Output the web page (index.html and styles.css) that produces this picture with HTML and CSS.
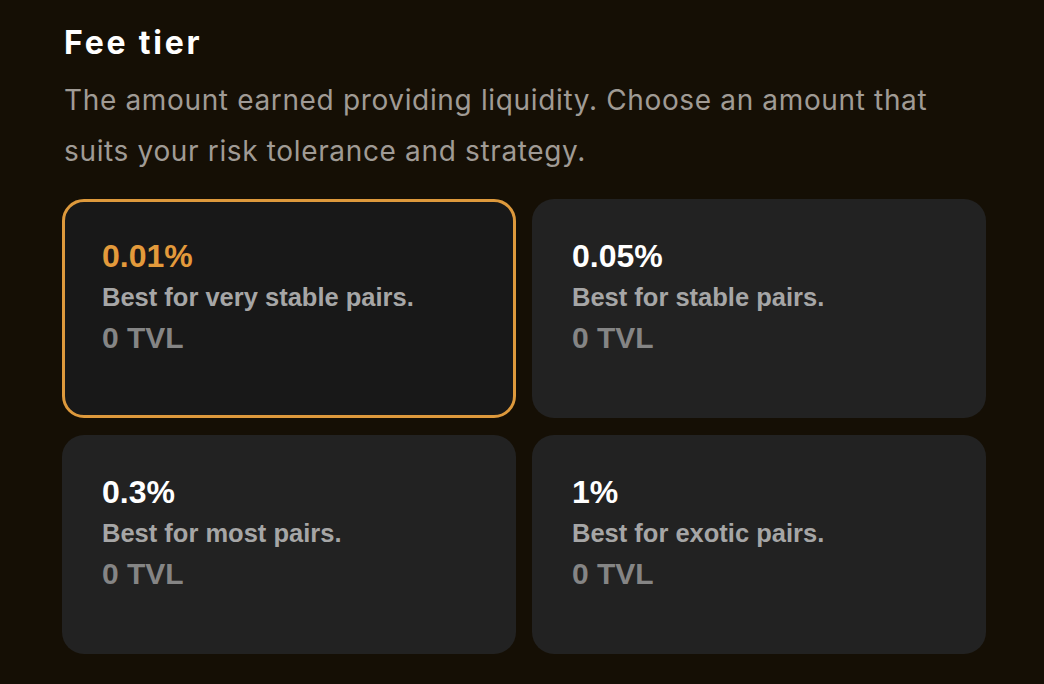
FILE: index.html
```html
<!DOCTYPE html>
<html lang="en">
<head>
<meta charset="utf-8">
<title>Fee tier</title>
<link rel="stylesheet" href="styles.css">
</head>
<body>
<section class="fee-tier">
  <h2 class="title">Fee tier</h2>
  <p class="subtitle">The amount earned providing liquidity. Choose an amount that suits your risk tolerance and strategy.</p>
  <div class="tiers">
    <div class="tier selected">
      <div class="pct">0.01%</div>
      <div class="desc">Best for very stable pairs.</div>
      <div class="tvl">0 TVL</div>
    </div>
    <div class="tier">
      <div class="pct">0.05%</div>
      <div class="desc">Best for stable pairs.</div>
      <div class="tvl">0 TVL</div>
    </div>
    <div class="tier">
      <div class="pct">0.3%</div>
      <div class="desc">Best for most pairs.</div>
      <div class="tvl">0 TVL</div>
    </div>
    <div class="tier">
      <div class="pct">1%</div>
      <div class="desc">Best for exotic pairs.</div>
      <div class="tvl">0 TVL</div>
    </div>
  </div>
</section>
</body>
</html>
```

FILE: styles.css
```css
html, body {
  margin: 0;
  padding: 0;
  background: #150f05;
}
body {
  width: 1044px;
  height: 684px;
  overflow: hidden;
}
.fee-tier {
  padding: 23px 58px 0 62px;
}
.title {
  margin: 0 0 0 2px;
  font-family: Inter, "Noto Sans", sans-serif;
  font-weight: 700;
  font-size: 32px;
  line-height: 40px;
  letter-spacing: 2.8px;
  color: #ffffff;
}
.subtitle {
  margin: 12px 0 0 2px;
  max-width: 880px;
  font-family: Inter, "Noto Sans", sans-serif;
  font-weight: 400;
  font-size: 28px;
  line-height: 51px;
  letter-spacing: 0.65px;
  color: #a09b95;
}
.tiers {
  margin-top: 22px;
  display: grid;
  grid-template-columns: 454px 454px;
  grid-auto-rows: 219px;
  column-gap: 16px;
  row-gap: 17px;
}
.tier {
  box-sizing: border-box;
  background: #222222;
  border: 3px solid transparent;
  border-radius: 22px;
  padding: 34px 20px 0 37px;
  font-family: "Liberation Sans", Arial, sans-serif;
  font-weight: 700;
}
.tier.selected {
  background: #181818;
  border-color: #dd993c;
}
.pct {
  font-size: 32px;
  line-height: 40px;
  color: #ffffff;
}
.selected .pct {
  color: #e39a3b;
}
.desc {
  font-size: 25.5px;
  line-height: 42px;
  color: #a6a6a6;
}
.tvl {
  font-size: 30px;
  line-height: 40px;
  color: #858585;
}
```
